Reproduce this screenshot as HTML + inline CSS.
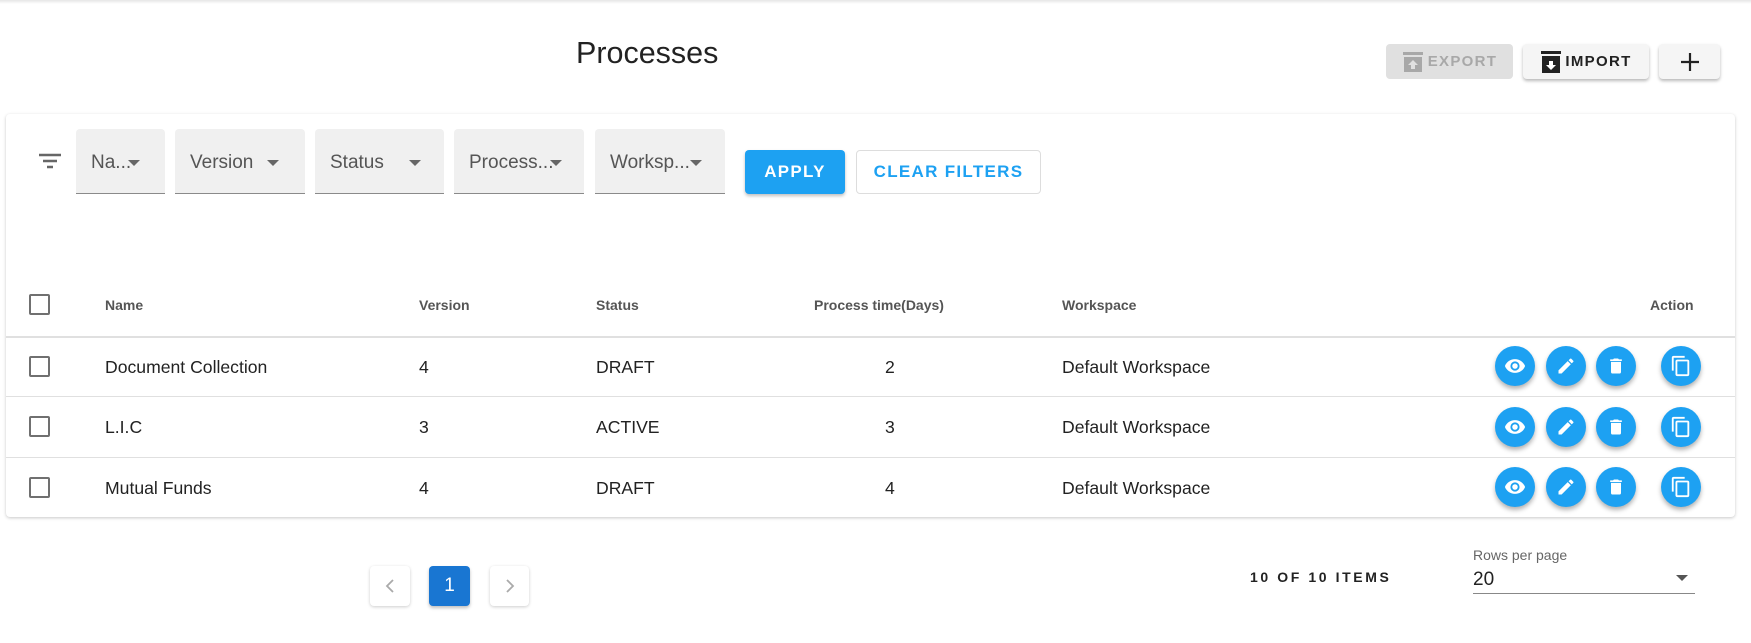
<!DOCTYPE html>
<html><head><style>
*{box-sizing:border-box;margin:0;padding:0}
body{width:1751px;height:643px;background:#fff;font-family:"Liberation Sans",Arial,sans-serif;position:relative;overflow:hidden;color:#212121}
.a{position:absolute}
.topsh{left:0;top:0;width:1751px;height:4px;background:linear-gradient(#e6e6e6,#fff)}
.title{left:576px;top:36px;font-size:30.5px;color:#222}
.btn{position:absolute;border-radius:4px;font-size:15px;font-weight:bold;letter-spacing:1.3px;display:flex;align-items:center;justify-content:center}
.raised{background:#f5f5f5;box-shadow:0 2px 3px rgba(0,0,0,.28)}
.card{left:6px;top:114px;width:1729px;height:403px;background:#fff;border-radius:4px;box-shadow:0 1px 3px rgba(0,0,0,.22)}
.fld{position:absolute;top:129px;height:65px;background:#f0f0f0;border-radius:4px 4px 0 0;border-bottom:1px solid #8a8a8a;font-size:19px;color:#555}
.fld span{position:absolute;left:15px;top:23px}
.fld i{position:absolute;top:31px;border-left:6px solid transparent;border-right:6px solid transparent;border-top:6px solid #666}
.cb{position:absolute;left:29px;width:21px;height:21px;border:2px solid #707070;border-radius:2px}
.th{position:absolute;top:297px;font-size:14px;font-weight:bold;color:#555}
.td{position:absolute;font-size:17.6px;color:#222}
.line{position:absolute;left:6px;width:1729px;height:1px;background:#e0e0e0}
.fab{position:absolute;width:40px;height:40px;border-radius:50%;background:#1da1f2;box-shadow:0 3px 5px rgba(0,0,0,.3);display:flex;align-items:center;justify-content:center}
.pg{position:absolute;top:566px;height:40px;border-radius:4px;display:flex;align-items:center;justify-content:center}
</style></head><body>
<div class="a topsh"></div>
<div class="a title">Processes</div>

<div class="btn" style="left:1386px;top:44px;width:127px;height:35px;background:#e0e0e0;color:#a8a8a8">
<svg width="22" height="22" viewBox="0 0 22 22" style="margin-right:4px"><rect x="1" y="1" width="20" height="3" fill="#a8a8a8"/><rect x="2" y="6" width="18" height="15" fill="#a8a8a8"/><path d="M11 9l-5 5h3v4h4v-4h3z" fill="#e0e0e0"/></svg>EXPORT</div>
<div class="btn raised" style="left:1523px;top:44px;width:126px;height:35px;color:#222">
<svg width="22" height="24" viewBox="0 0 22 24" style="margin-right:3px"><rect x="1" y="1" width="20" height="3" fill="#222"/><rect x="2" y="6" width="18" height="17" fill="#222"/><path d="M11 20l-5-5h3v-4h4v4h3z" fill="#fff"/></svg>IMPORT</div>
<div class="btn raised" style="left:1659px;top:44px;width:61px;height:35px">
<svg width="20" height="20" viewBox="0 0 20 20"><path d="M10 1v18M1 10h18" stroke="#222" stroke-width="2.2"/></svg></div>

<div class="a card"></div>
<svg class="a" style="left:38px;top:152px" width="24" height="18" viewBox="0 0 24 18"><path d="M1 3h22M5 9h14M9 15h6" stroke="#666" stroke-width="2.4"/></svg>
<div class="fld" style="left:76px;width:89px"><span>Na...</span><i style="left:52px"></i></div>
<div class="fld" style="left:175px;width:130px"><span>Version</span><i style="left:92px"></i></div>
<div class="fld" style="left:315px;width:129px"><span>Status</span><i style="left:94px"></i></div>
<div class="fld" style="left:454px;width:130px"><span>Process...</span><i style="left:96px"></i></div>
<div class="fld" style="left:595px;width:130px"><span>Worksp...</span><i style="left:95px"></i></div>
<div class="btn" style="left:745px;top:150px;width:100px;height:44px;background:#1da1f2;color:#fff;font-size:17px;box-shadow:0 2px 3px rgba(0,0,0,.25)">APPLY</div>
<div class="btn" style="left:856px;top:150px;width:185px;height:44px;border:1px solid #ddd;color:#1da1f2;font-size:17px">CLEAR FILTERS</div>

<div class="cb" style="top:294px"></div>
<div class="th" style="left:105px">Name</div>
<div class="th" style="left:419px">Version</div>
<div class="th" style="left:596px">Status</div>
<div class="th" style="left:814px">Process time(Days)</div>
<div class="th" style="left:1062px">Workspace</div>
<div class="th" style="left:1650px">Action</div>
<div class="line" style="top:336px;height:2px"></div>
<div class="line" style="top:396px"></div>
<div class="line" style="top:457px"></div>

<div class="cb" style="top:356px"></div>
<div class="td" style="left:105px;top:357px">Document Collection</div>
<div class="td" style="left:419px;top:357px">4</div>
<div class="td" style="left:596px;top:357px">DRAFT</div>
<div class="td" style="left:885px;top:357px">2</div>
<div class="td" style="left:1062px;top:357px">Default Workspace</div>

<div class="cb" style="top:416px"></div>
<div class="td" style="left:105px;top:417px">L.I.C</div>
<div class="td" style="left:419px;top:417px">3</div>
<div class="td" style="left:596px;top:417px">ACTIVE</div>
<div class="td" style="left:885px;top:417px">3</div>
<div class="td" style="left:1062px;top:417px">Default Workspace</div>

<div class="cb" style="top:477px"></div>
<div class="td" style="left:105px;top:478px">Mutual Funds</div>
<div class="td" style="left:419px;top:478px">4</div>
<div class="td" style="left:596px;top:478px">DRAFT</div>
<div class="td" style="left:885px;top:478px">4</div>
<div class="td" style="left:1062px;top:478px">Default Workspace</div>

<div id="acts"></div>
<script>
var ys=[346,407,467],xs=[1495,1546,1596,1661];
var ic=[
'<svg width="22" height="22" viewBox="0 0 24 24"><path fill="#fff" d="M12 4.5C7 4.5 2.7 7.6 1 12c1.7 4.4 6 7.5 11 7.5s9.3-3.1 11-7.5c-1.7-4.4-6-7.5-11-7.5zM12 17a5 5 0 110-10 5 5 0 010 10zm0-8a3 3 0 100 6 3 3 0 000-6z"/></svg>',
'<svg width="20" height="20" viewBox="0 0 24 24"><path fill="#fff" d="M3 17.25V21h3.75L17.8 9.94l-3.75-3.75L3 17.25zM20.7 7.040a1 1 0 000-1.41l-2.34-2.34a1 1 0 00-1.41 0l-1.83 1.83 3.75 3.75 1.830-1.830z"/></svg>',
'<svg width="20" height="20" viewBox="0 0 24 24"><path fill="#fff" d="M6 19a2 2 0 002 2h8a2 2 0 002-2V7H6v12zM19 4h-3.5l-1-1h-5l-1 1H5v2h14V4z"/></svg>',
'<svg width="22" height="22" viewBox="0 0 24 24"><path fill="#fff" d="M16 1H4a2 2 0 00-2 2v14h2V3h12V1zm3 4H8a2 2 0 00-2 2v14a2 2 0 002 2h11a2 2 0 002-2V7a2 2 0 00-2-2zm0 16H8V7h11v14z"/></svg>'];
var h='';ys.forEach(function(y){xs.forEach(function(x,i){h+='<div class="fab" style="left:'+x+'px;top:'+y+'px">'+ic[i]+'</div>';});});
document.getElementById('acts').innerHTML=h;
</script>

<div class="pg" style="left:370px;width:40px;background:#fff;box-shadow:0 1px 3px rgba(0,0,0,.2)"><svg width="12" height="16" viewBox="0 0 12 16"><path d="M9 2L3 8l6 6" stroke="#aaa" stroke-width="1.8" fill="none"/></svg></div>
<div class="pg" style="left:429px;width:41px;background:#1976d2;color:#fff;font-size:19px;box-shadow:0 2px 3px rgba(0,0,0,.25)">1</div>
<div class="pg" style="left:490px;width:39px;background:#fff;box-shadow:0 1px 3px rgba(0,0,0,.2)"><svg width="12" height="16" viewBox="0 0 12 16"><path d="M3 2l6 6-6 6" stroke="#aaa" stroke-width="1.8" fill="none"/></svg></div>

<div class="a" style="left:1250px;top:569px;font-size:14px;font-weight:bold;letter-spacing:2.6px;color:#222">10 OF 10 ITEMS</div>
<div class="a" style="left:1473px;top:547px;font-size:14px;color:#666">Rows per page</div>
<div class="a" style="left:1473px;top:569px;font-size:19px;color:#222">20</div>
<div class="a" style="left:1676px;top:575px;border-left:6px solid transparent;border-right:6px solid transparent;border-top:6px solid #555"></div>
<div class="a" style="left:1473px;top:593px;width:222px;height:1px;background:#888"></div>
</body></html>
